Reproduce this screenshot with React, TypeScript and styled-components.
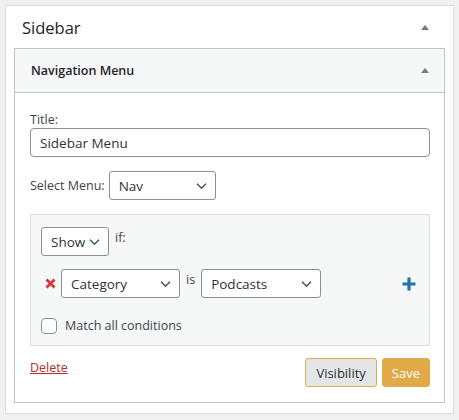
import React from "react";
import styled, { createGlobalStyle } from "styled-components";

const Global = createGlobalStyle`
  html, body { margin: 0; padding: 0; background: #f0f0f1; }
  body { font-family: "Open Sans", "Noto Sans", sans-serif; color: #1d2327; font-size: 13px; }
  * { box-sizing: border-box; }
`;

const Page = styled.div`
  padding: 5px 5px 6px 5px;
`;

const Outer = styled.div`
  width: 449px;
  background: #fff;
  border: 1px solid #dcdcde;
  padding: 0 8px 10px 8px;
`;

const OuterHeader = styled.div`
  height: 42px;
  display: flex;
  align-items: center;
  justify-content: space-between;
  padding: 1px 16px 0 8px;
`;

const OuterTitle = styled.h2`
  margin: 0;
  font-size: 16.5px;
  font-weight: 500;
  color: #1d2327;
`;

const Arrow = styled.span`
  width: 0;
  height: 0;
  border-left: 4.5px solid transparent;
  border-right: 4.5px solid transparent;
  border-bottom: 5px solid #787c82;
`;

const Widget = styled.div`
  border: 1px solid #c3c4c7;
`;

const WidgetHeader = styled.div`
  height: 44px;
  background: #f6f7f7;
  border-bottom: 1px solid #c3c4c7;
  display: flex;
  align-items: center;
  justify-content: space-between;
  padding: 0 15px 0 16px;
`;

const WidgetTitle = styled.h3`
  margin: 0;
  font-size: 12.5px;
  font-weight: 600;
  color: #1d2327;
`;

const Body = styled.div`
  padding: 18px 14px 15px 15px;
`;

const Label = styled.label`
  display: block;
  line-height: 17px;
  font-size: 12.5px;
  color: #3c434a;
`;

const TextInput = styled.input`
  display: block;
  width: 100%;
  height: 29px;
  border: 1px solid #8c8f94;
  border-radius: 4px;
  padding: 0 9px;
  font-family: inherit;
  font-size: 13.5px;
  color: #2c3338;
  background: #fff;
  outline: none;
`;

const Row = styled.div<{ $mt?: number }>`
  display: flex;
  align-items: center;
  margin-top: ${(p) => p.$mt ?? 0}px;
`;

const InlineText = styled.span<{ $ml?: number; $mr?: number; $up?: boolean }>`
  font-size: 12.5px;
  color: #3c434a;
  margin-left: ${(p) => p.$ml ?? 0}px;
  margin-right: ${(p) => p.$mr ?? 0}px;
  align-self: ${(p) => (p.$up ? "flex-start" : "center")};
  margin-top: ${(p) => (p.$up ? "2px" : "0")};
`;

const SelectBox = styled.div<{ $w: number }>`
  width: ${(p) => p.$w}px;
  height: 29px;
  border: 1px solid #8c8f94;
  border-radius: 3px;
  background: #fff;
  display: flex;
  align-items: center;
  justify-content: space-between;
  padding: 0 8px 0 9px;
  font-size: 13.5px;
  color: #2c3338;
`;

const Chevron = () => (
  <svg width="11" height="8" viewBox="0 0 11 8">
    <path d="M1 1.8 L5.5 6.2 L10 1.8" fill="none" stroke="#50575e" strokeWidth="1.6" />
  </svg>
);

const Select = ({ w, children }: { w: number; children: React.ReactNode }) => (
  <SelectBox $w={w}>
    <span>{children}</span>
    <Chevron />
  </SelectBox>
);

const Conditions = styled.div`
  margin-top: 14px;
  background: #f6f7f7;
  border: 1px solid #dcdcde;
  padding: 12px 11px 11px 10px;
`;

const RemoveBtn = styled.span`
  width: 20px;
  display: flex;
  align-items: center;
  justify-content: flex-start;
  padding-left: 4px;
`;

const AddBtn = styled.span`
  margin-left: auto;
  margin-right: 2px;
  display: flex;
`;

const CheckRow = styled.label`
  display: flex;
  align-items: center;
  margin-top: 19px;
  font-size: 12.5px;
  color: #3c434a;
`;

const Check = styled.span`
  width: 16px;
  height: 16px;
  border: 1px solid #8c8f94;
  border-radius: 4px;
  background: #fff;
  margin-right: 8px;
`;

const Footer = styled.div`
  display: flex;
  justify-content: space-between;
  align-items: flex-start;
  margin-top: 12px;
`;

const DeleteLink = styled.a`
  color: #b32d2e;
  text-decoration: underline;
  font-size: 12.5px;
  margin-top: 1px;
`;

const Buttons = styled.div`
  display: flex;
  gap: 5px;
`;

const Button = styled.button<{ $primary?: boolean }>`
  height: 29px;
  padding: 0 ${(p) => (p.$primary ? 9 : 10)}px;
  border-radius: 3px;
  border: 1px solid #e0ab4c;
  background: ${(p) => (p.$primary ? "#e2a948" : "#e4e5e7")};
  color: ${(p) => (p.$primary ? "#fff" : "#2c3338")};
  font-family: inherit;
  font-size: 13px;
`;

export default function App() {
  return (
    <>
      <Global />
      <Page>
        <Outer>
          <OuterHeader>
            <OuterTitle>Sidebar</OuterTitle>
            <Arrow />
          </OuterHeader>
          <Widget>
            <WidgetHeader>
              <WidgetTitle>Navigation Menu</WidgetTitle>
              <Arrow />
            </WidgetHeader>
            <Body>
              <Label>Title:</Label>
              <TextInput defaultValue="Sidebar Menu" />
              <Row $mt={14}>
                <InlineText $mr={4}>Select Menu:</InlineText>
                <Select w={107}>Nav</Select>
              </Row>
              <Conditions>
                <Row>
                  <Select w={68}>Show</Select>
                  <InlineText $ml={6} $up>if:</InlineText>
                </Row>
                <Row $mt={13}>
                  <RemoveBtn>
                    <svg width="11" height="11" viewBox="0 0 11 11">
                      <path d="M1.5 1.5 L9.5 9.5 M9.5 1.5 L1.5 9.5" stroke="#d63638" strokeWidth="2.8" />
                    </svg>
                  </RemoveBtn>
                  <Select w={119}>Category</Select>
                  <InlineText $ml={6} $mr={6} $up>is</InlineText>
                  <Select w={120}>Podcasts</Select>
                  <AddBtn>
                    <svg width="14" height="14" viewBox="0 0 14 14">
                      <path d="M7 0.5 V13.5 M0.5 7 H13.5" stroke="#2271b1" strokeWidth="3.2" />
                    </svg>
                  </AddBtn>
                </Row>
                <CheckRow>
                  <Check />
                  Match all conditions
                </CheckRow>
              </Conditions>
              <Footer>
                <DeleteLink href="#">Delete</DeleteLink>
                <Buttons>
                  <Button>Visibility</Button>
                  <Button $primary>Save</Button>
                </Buttons>
              </Footer>
            </Body>
          </Widget>
        </Outer>
      </Page>
    </>
  );
}
